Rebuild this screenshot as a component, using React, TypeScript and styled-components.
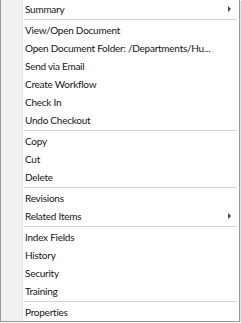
import React from "react"
import styled, { createGlobalStyle } from "styled-components"

const GlobalStyle = createGlobalStyle`
  html, body {
    margin: 0;
    padding: 0;
    background: #ffffff;
  }
`

const MenuFrame = styled.div`
  box-sizing: border-box;
  width: 240px;
  border-right: 1px solid #979797;
  border-bottom: 1px solid #979797;
  border-left: 1px solid #979797;
  box-shadow: 1px 1px 0 #e4e4e4;
  background: linear-gradient(
    to right,
    #f0f0f0 0 21px,
    #e2e3e3 21px 22px,
    #ffffff 22px
  );
  font-family: Lato, "Liberation Sans", sans-serif;
  font-size: 10px;
  letter-spacing: -0.25px;
  color: #151515;
  display: flex;
  flex-direction: column;
`

const Item = styled.div`
  height: 18px;
  line-height: 20px;
  padding-left: 24px;
  padding-right: 8px;
  display: flex;
  align-items: center;
  justify-content: space-between;
  white-space: nowrap;
`

const Label = styled.span``

const SubArrow = styled.span`
  width: 0;
  height: 0;
  border-top: 3px solid transparent;
  border-bottom: 3px solid transparent;
  border-left: 3px solid #4a4a4a;
`

const Separator = styled.div`
  height: 3px;
  margin-left: 23px;
  margin-right: 2px;
  display: flex;
  align-items: center;

  &::after {
    content: "";
    flex: 1;
    height: 1px;
    background: #d4d4d4;
    border-bottom: 1px solid #ffffff;
  }
`

type Entry = { label: string; sub?: boolean } | "sep"

const entries: Entry[] = [
  { label: "Summary", sub: true },
  "sep",
  { label: "View/Open Document" },
  { label: "Open Document Folder: /Departments/Hu..." },
  { label: "Send via Email" },
  { label: "Create Workflow" },
  { label: "Check In" },
  { label: "Undo Checkout" },
  "sep",
  { label: "Copy" },
  { label: "Cut" },
  { label: "Delete" },
  "sep",
  { label: "Revisions" },
  { label: "Related Items", sub: true },
  "sep",
  { label: "Index Fields" },
  { label: "History" },
  { label: "Security" },
  { label: "Training" },
  "sep",
  { label: "Properties" },
]

const App = () => (
  <>
    <GlobalStyle />
    <MenuFrame>
      {entries.map((e, i) =>
        e === "sep" ? (
          <Separator key={i} />
        ) : (
          <Item key={i}>
            <Label>{e.label}</Label>
            {e.sub && <SubArrow />}
          </Item>
        )
      )}
    </MenuFrame>
  </>
)

export default App
